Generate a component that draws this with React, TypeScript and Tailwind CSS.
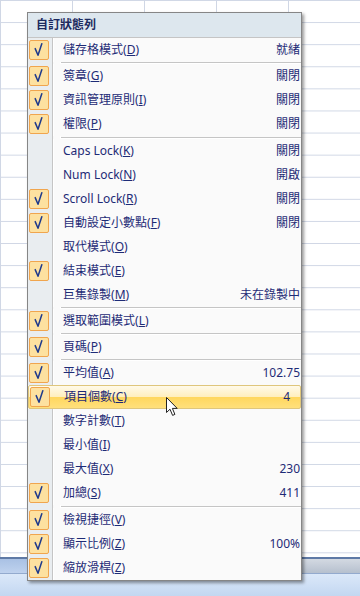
import type { ReactNode } from "react";

type Item =
  | { sep: true; h?: number }
  | {
      sep?: false;
      label: string;
      hotkey: string;
      value?: string;
      checked?: boolean;
      active?: boolean;
    };

const items: Item[] = [
  { label: "儲存格模式", hotkey: "D", value: "就緒", checked: true },
  { sep: true },
  { label: "簽章", hotkey: "G", value: "關閉", checked: true },
  { label: "資訊管理原則", hotkey: "I", value: "關閉", checked: true },
  { label: "權限", hotkey: "P", value: "關閉", checked: true },
  { sep: true, h: 3 },
  { label: "Caps Lock", hotkey: "K", value: "關閉" },
  { label: "Num Lock", hotkey: "N", value: "開啟" },
  { label: "Scroll Lock", hotkey: "R", value: "關閉", checked: true },
  { label: "自動設定小數點", hotkey: "F", value: "關閉", checked: true },
  { label: "取代模式", hotkey: "O" },
  { label: "結束模式", hotkey: "E", checked: true },
  { label: "巨集錄製", hotkey: "M", value: "未在錄製中" },
  { sep: true },
  { label: "選取範圍模式", hotkey: "L", checked: true },
  { sep: true },
  { label: "頁碼", hotkey: "P", checked: true },
  { sep: true },
  { label: "平均值", hotkey: "A", value: "102.75", checked: true },
  { label: "項目個數", hotkey: "C", value: "4", checked: true, active: true },
  { label: "數字計數", hotkey: "T" },
  { label: "最小值", hotkey: "I" },
  { label: "最大值", hotkey: "X", value: "230" },
  { label: "加總", hotkey: "S", value: "411", checked: true },
  { sep: true, h: 3 },
  { label: "檢視捷徑", hotkey: "V", checked: true },
  { label: "顯示比例", hotkey: "Z", value: "100%", checked: true },
  { label: "縮放滑桿", hotkey: "Z", checked: true },
];

function CheckBox() {
  return (
    <div className="flex h-[20px] w-[20px] items-center justify-center rounded-[2px] border border-[#f0a54e] bg-[#fde1a0]">
      <svg width="18" height="18" viewBox="0 0 18 18">
        <path
          d="M5.2 7.6 L8 14.2 L11.8 2.8"
          fill="none"
          stroke="#1f3a8c"
          strokeWidth="1.5"
          strokeLinecap="round"
          strokeLinejoin="round"
        />
      </svg>
    </div>
  );
}

function Gutter({ children, plain }: { children?: ReactNode; plain?: boolean }) {
  return (
    <div
      className={`flex w-[25px] shrink-0 items-center pl-[1px] ${
        plain ? "" : "border-r border-[#c5c5c5] bg-[#e9edf0]"
      }`}
    >
      {children}
    </div>
  );
}

function Row({ item }: { item: Extract<Item, { label: string }> }) {
  return (
    <div
      className={`flex h-[24px] ${
        item.active
          ? "rounded-[2px] border border-[#dfc67c] bg-[linear-gradient(#fffaea_0%,#ffefbf_48%,#ffd75f_52%,#ffe07c_100%)]"
          : ""
      }`}
    >
      <Gutter plain={item.active}>{item.checked && <CheckBox />}</Gutter>
      <div
        className={`flex flex-1 items-center justify-between pl-[9px] ${
          item.active ? "border-l border-transparent pr-[10px]" : "border-l border-white pr-[1px]"
        }`}
      >
        <span>
          {item.label}(<span className="underline underline-offset-[1px]">{item.hotkey}</span>)
        </span>
        {item.value && <span>{item.value}</span>}
      </div>
    </div>
  );
}

function Separator({ h = 2 }: { h?: number }) {
  return (
    <div className={`flex ${h === 3 ? "h-[3px]" : "h-[2px]"}`}>
      <Gutter />
      <div className="ml-[7px] flex flex-1 flex-col justify-center border-l border-white">
        <div className="h-[1px] bg-[#c5c5c5]" />
        <div className="h-[1px] bg-white" />
      </div>
    </div>
  );
}

function Cursor() {
  return (
    <svg width="13" height="20" viewBox="0 0 13 20">
      <path
        d="M0.5 0.5 L0.5 15.5 L4 12.2 L6.6 18.4 L8.9 17.4 L6.4 11.4 L11.2 11.4 Z"
        fill="#fff"
        stroke="#222"
        strokeWidth="1"
        strokeLinejoin="miter"
      />
    </svg>
  );
}

export default function App() {
  return (
    <div className="relative h-[596px] w-[360px] overflow-hidden bg-white font-['Noto_Sans','Noto_Sans_CJK_TC',sans-serif] text-[12px]">
      <div className="flex h-full flex-col">
        <div className="flex-1 bg-[linear-gradient(#d0d7e5_1px,transparent_1px),linear-gradient(90deg,#d0d7e5_1px,transparent_1px)] bg-[size:72px_22.1px]" />
        <div className="h-[2px] bg-[#5f7aa6]" />
        <div className="flex h-[14px]">
          <div className="w-[160px] bg-[linear-gradient(#a9c1e4,#bfd2ee)]" />
          <div className="flex-1 bg-[linear-gradient(#d3d9e2,#b6c0ce)]" />
        </div>
        <div className="h-[23px] border-t border-[#93aace] bg-[linear-gradient(#dbe8f9,#c3d7f1)]" />
      </div>

      {/* status bar context menu */}
      <div className="absolute left-[27px] top-[12px] w-[275px] border border-[#868686] bg-[#fafafa] text-[#1e2b76] shadow-[2px_2px_3px_rgba(0,0,0,0.4)]">
        <div className="flex h-[25px] items-center border-b border-[#c5c5c5] bg-[#dde7ee] pl-[8px] font-bold text-[#1b2a5e]">
          自訂狀態列
        </div>
        {items.map((item, i) =>
          item.sep ? <Separator key={i} h={item.h} /> : <Row key={i} item={item} />
        )}
      </div>

      <div className="absolute left-[166px] top-[397px]">
        <Cursor />
      </div>
    </div>
  );
}
